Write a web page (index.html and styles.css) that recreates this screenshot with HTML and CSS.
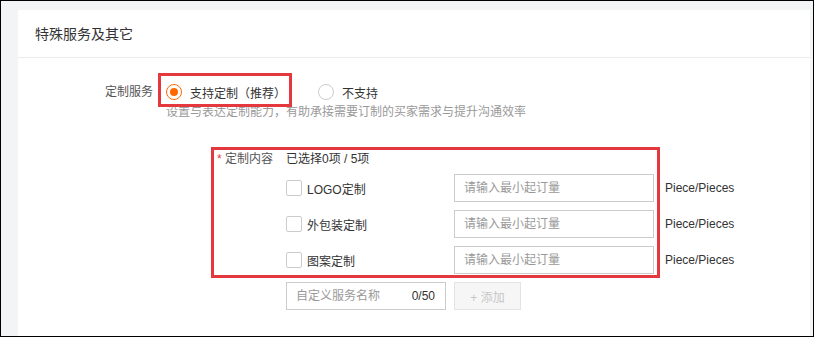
FILE: index.html
```html
<!DOCTYPE html>
<html lang="zh-CN">
<head>
    <meta charset="UTF-8">
    <title>特殊服务及其它</title>
    <link rel="stylesheet" href="styles.css">
</head>
<body>
<div class="frame">
    <div class="page">
        <div class="card">
            <div class="card-head">特殊服务及其它</div>
            <div class="card-body">
                <div class="row">
                    <div class="label">定制服务</div>
                    <div class="radios">
                        <label class="radio on"><i></i>支持定制（推荐）</label>
                        <label class="radio"><i></i>不支持</label>
                    </div>
                </div>
                <div class="hint">设置与表达定制能力，有助承接需要订制的买家需求与提升沟通效率</div>

                <div class="custom">
                    <div class="label wide"><span class="star">*</span> 定制内容</div>
                    <div class="custom-main">
                        <div class="count">已选择0项 / 5项</div>
                        <div class="item">
                            <label class="check"><i></i>LOGO定制</label>
                            <input class="ipt" type="text" placeholder="请输入最小起订量">
                            <span class="unit">Piece/Pieces</span>
                        </div>
                        <div class="item">
                            <label class="check"><i></i>外包装定制</label>
                            <input class="ipt" type="text" placeholder="请输入最小起订量">
                            <span class="unit">Piece/Pieces</span>
                        </div>
                        <div class="item">
                            <label class="check"><i></i>图案定制</label>
                            <input class="ipt" type="text" placeholder="请输入最小起订量">
                            <span class="unit">Piece/Pieces</span>
                        </div>
                        <div class="add-row">
                            <div class="name-box">
                                <input type="text" placeholder="自定义服务名称">
                                <span class="len">0/50</span>
                            </div>
                            <button class="add-btn" disabled>+ 添加</button>
                        </div>
                    </div>
                </div>

                <!-- 标注框 -->
                <div class="mark mark1"></div>
                <div class="mark mark2"></div>
            </div>
        </div>
    </div>
</div>
</body>
</html>
```

FILE: styles.css
```css
*{
    box-sizing: border-box;
}
body{
    margin: 0;
    font-family: "Liberation Sans", "Noto Sans CJK SC", sans-serif;
    font-size: 12px;
    color: #333;
}
.frame{
    width: 814px;
    height: 337px;
    border: 1px solid #000;
    overflow: hidden;
}
.page{
    height: 100%;
    background: #f3f4f6;
    padding: 9px 3px 0 17px;
}
.card{
    background: #fff;
    height: 100%;
}
.card-head{
    height: 48px;
    line-height: 48px;
    padding-left: 17px;
    font-size: 14px;
    color: #333;
    border-bottom: 1px solid #ebebeb;
}
.card-body{
    position: relative;
    padding-top: 24px;
}
.row{
    display: flex;
    align-items: center;
    height: 20px;
}
.label{
    width: 135px;
    margin-right: 5px;
    text-align: right;
    color: #555;
    line-height: 20px;
}
.label.wide{
    width: 255px;
    margin-right: 13px;
}
.star{
    color: #e4393c;
}
.radios{
    display: flex;
    align-items: center;
    padding-left: 8px;
}
.radio{
    display: flex;
    align-items: center;
    font-size: 12px;
    color: #333;
}
.radio + .radio{
    margin-left: 32px;
}
.radio i{
    width: 16px;
    height: 16px;
    border: 1px solid #ccc;
    border-radius: 50%;
    margin-right: 8px;
    position: relative;
}
.radio.on i{
    border-color: #ff6a00;
}
.radio.on i:after{
    content: "";
    position: absolute;
    left: 3px;
    top: 3px;
    width: 8px;
    height: 8px;
    border-radius: 50%;
    background: #ff6a00;
}
.hint{
    margin: 1px 0 0 148px;
    line-height: 18px;
    color: #999;
}
.custom{
    display: flex;
    margin-top: 28px;
}
.count{
    line-height: 20px;
    color: #333;
    margin-bottom: 5px;
}
.item{
    display: flex;
    align-items: center;
    height: 28px;
    margin-bottom: 8px;
}
.check{
    width: 168px;
    display: flex;
    align-items: center;
    color: #333;
}
.check i{
    width: 16px;
    height: 16px;
    border: 1px solid #ccc;
    border-radius: 2px;
    margin-right: 5px;
}
.ipt{
    width: 200px;
    height: 28px;
    border: 1px solid #ccc;
    padding: 0 9px;
    font-family: inherit;
    font-size: 12px;
    outline: none;
}
.ipt::placeholder, .name-box input::placeholder{
    color: #999;
}
.unit{
    margin-left: 11px;
    color: #333;
}
.add-row{
    display: flex;
    margin-top: 8px;
}
.name-box{
    width: 160px;
    height: 28px;
    border: 1px solid #ccc;
    display: flex;
    align-items: center;
    padding: 0 10px 0 9px;
}
.name-box input{
    flex: 1;
    width: 0;
    border: none;
    outline: none;
    padding: 0;
    font-family: inherit;
    font-size: 12px;
}
.len{
    color: #333;
}
.add-btn{
    margin-left: 8px;
    width: 67px;
    height: 28px;
    background: #f6f6f6;
    border: 1px solid #e3e3e3;
    color: #c8c8c8;
    font-family: inherit;
    font-size: 12px;
    padding: 0;
}
.mark{
    position: absolute;
    border: 3px solid #e4383e;
}
.mark1{
    left: 140px;
    top: 15px;
    width: 134px;
    height: 34px;
}
.mark2{
    left: 193px;
    top: 89px;
    width: 449px;
    height: 131px;
}
```
